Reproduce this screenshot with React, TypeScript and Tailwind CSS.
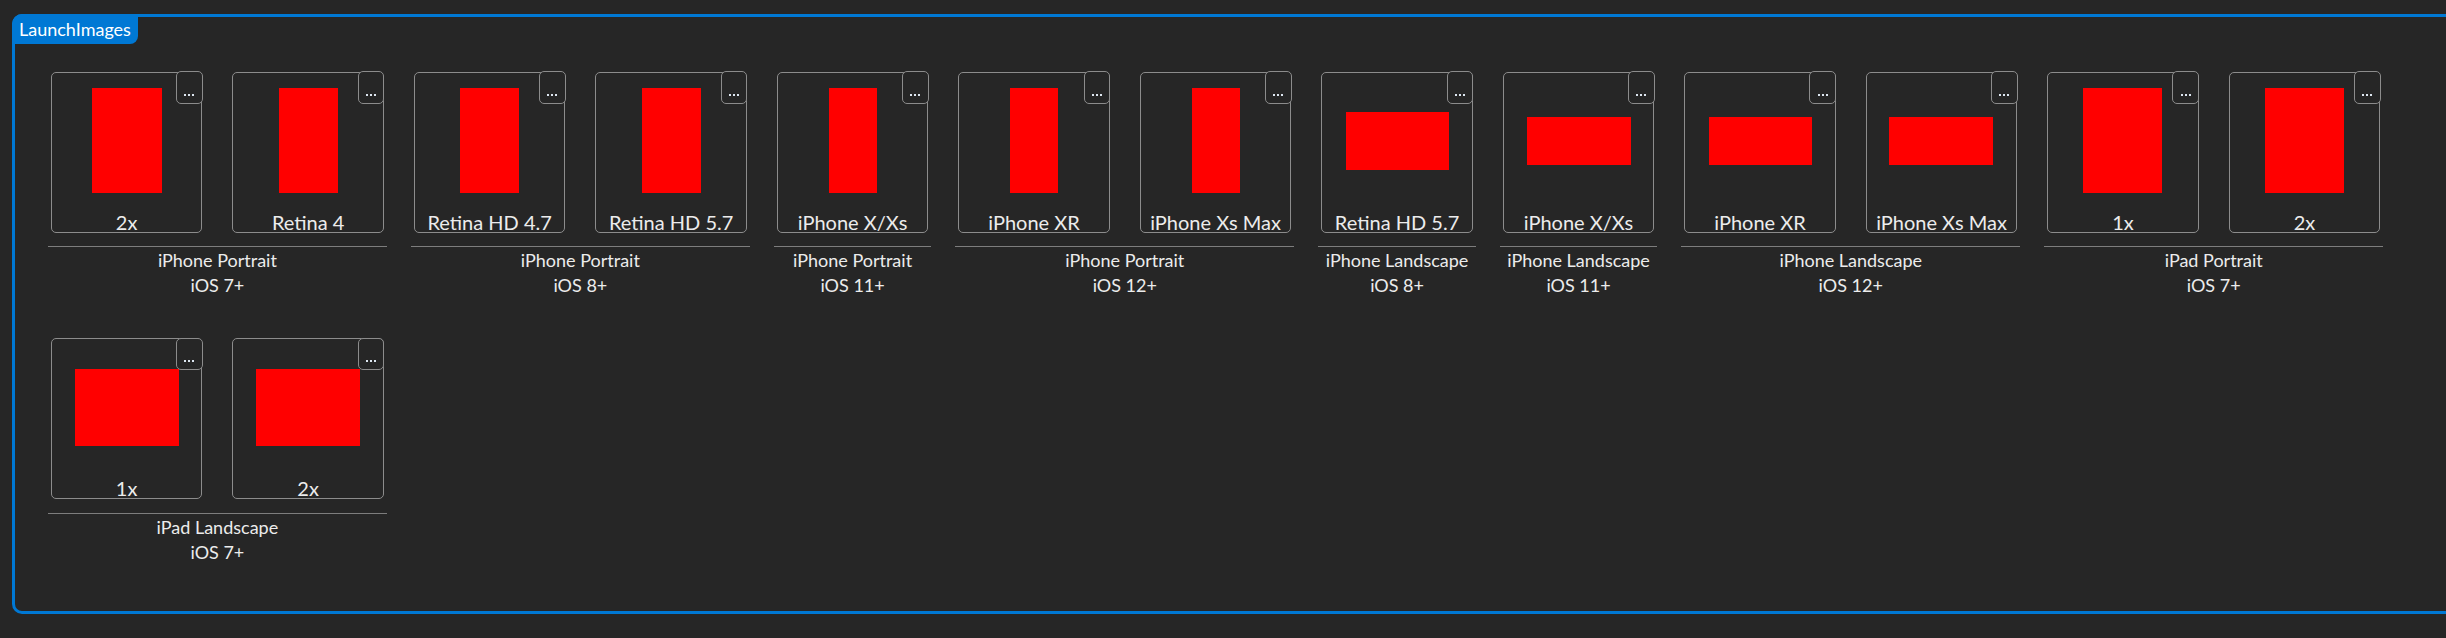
type Shot = { label: string; size: string };
type Group = { title: string; ios: string; shots: Shot[] };

const groups: Group[] = [
  {
    title: "iPhone Portrait",
    ios: "iOS 7+",
    shots: [
      { label: "2x", size: "w-[70px] h-[105px]" },
      { label: "Retina 4", size: "w-[59px] h-[105px]" },
    ],
  },
  {
    title: "iPhone Portrait",
    ios: "iOS 8+",
    shots: [
      { label: "Retina HD 4.7", size: "w-[59px] h-[105px]" },
      { label: "Retina HD 5.7", size: "w-[59px] h-[105px]" },
    ],
  },
  {
    title: "iPhone Portrait",
    ios: "iOS 11+",
    shots: [{ label: "iPhone X/Xs", size: "w-[48px] h-[105px]" }],
  },
  {
    title: "iPhone Portrait",
    ios: "iOS 12+",
    shots: [
      { label: "iPhone XR", size: "w-[48px] h-[105px]" },
      { label: "iPhone Xs Max", size: "w-[48px] h-[105px]" },
    ],
  },
  {
    title: "iPhone Landscape",
    ios: "iOS 8+",
    shots: [{ label: "Retina HD 5.7", size: "w-[103px] h-[58px]" }],
  },
  {
    title: "iPhone Landscape",
    ios: "iOS 11+",
    shots: [{ label: "iPhone X/Xs", size: "w-[104px] h-[48px]" }],
  },
  {
    title: "iPhone Landscape",
    ios: "iOS 12+",
    shots: [
      { label: "iPhone XR", size: "w-[103px] h-[48px]" },
      { label: "iPhone Xs Max", size: "w-[104px] h-[48px]" },
    ],
  },
  {
    title: "iPad Portrait",
    ios: "iOS 7+",
    shots: [
      { label: "1x", size: "w-[79px] h-[105px]" },
      { label: "2x", size: "w-[79px] h-[105px]" },
    ],
  },
  {
    title: "iPad Landscape",
    ios: "iOS 7+",
    shots: [
      { label: "1x", size: "w-[104px] h-[77px]" },
      { label: "2x", size: "w-[104px] h-[77px]" },
    ],
  },
];

function ShotCell({ shot }: { shot: Shot }) {
  return (
    <div className="relative w-[151.3px] h-[161px] border-[1.5px] border-[#8c8c8c] rounded-[5px]">
      {/* preview */}
      <div className="absolute top-[15.5px] inset-x-0 h-[105px] flex items-center justify-center">
        <div className={`bg-[#ff0000] ${shot.size}`} />
      </div>

      {/* menu button */}
      <div className="absolute top-[-1.5px] right-[-1.5px] w-[26.7px] h-[32.6px] border-[1.5px] border-[#8c8c8c] rounded-[5px] bg-[#262626] flex items-end justify-center gap-[2px] pb-[7px]">
        <span className="w-[2px] h-[2px] bg-[#dde6f0]" />
        <span className="w-[2px] h-[2px] bg-[#dde6f0]" />
        <span className="w-[2px] h-[2px] bg-[#dde6f0]" />
      </div>

      <div className="absolute bottom-0 inset-x-0 text-center text-[20px] leading-none whitespace-nowrap">
        {shot.label}
      </div>
    </div>
  );
}

export default function App() {
  return (
    <div
      className="w-[2446px] h-[638px] overflow-hidden bg-[#262626] text-[#ececec]"
      style={{ fontFamily: "Lato, 'Open Sans', sans-serif" }}
    >
      <div className="relative ml-[12px] mt-[14px] w-[2450px] h-[600px] border-[3px] border-[#0078d4] rounded-[10px] pl-[33px] pt-[54.7px]">
        {/* Tab */}
        <div className="absolute top-[-3px] left-[-3px] h-[30px] px-[7px] flex items-center bg-[#0078d4] rounded-tl-[10px] rounded-br-[8px] text-white text-[18px]">
          LaunchImages
        </div>

        <div className="flex flex-wrap gap-x-[24.2px] gap-y-[40px]">
          {groups.map((g, i) => (
            <div key={i} className="flex flex-col px-[3px]">
              <div className="flex gap-[30.2px]">
                {g.shots.map((s, j) => (
                  <ShotCell key={j} shot={s} />
                ))}
              </div>
              <div className="mt-[13.6px] mx-[-3px] border-t border-[#7d7d7d] pt-[1px] text-center text-[18px] leading-[25px]">
                <div>{g.title}</div>
                <div>{g.ios}</div>
              </div>
            </div>
          ))}
        </div>
      </div>
    </div>
  );
}
